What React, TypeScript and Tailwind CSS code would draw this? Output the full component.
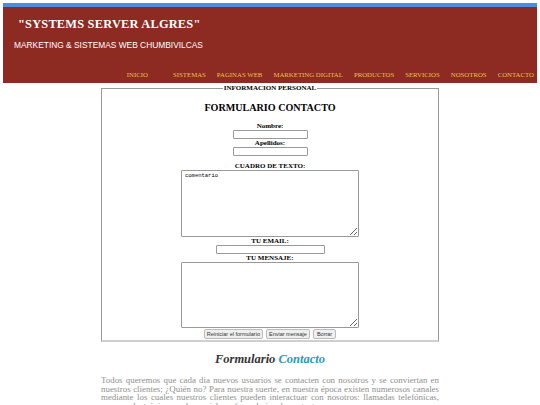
const navItems = [
  "SISTEMAS",
  "PAGINAS WEB",
  "MARKETING DIGITAL",
  "PRODUCTOS",
  "SERVICIOS",
  "NOSOTROS",
  "CONTACTO",
];

export default function App() {
  const serif = { fontFamily: '"Liberation Serif", "Times New Roman", serif' };
  return (
    <div className="w-[540px] h-[405px] overflow-hidden bg-white" style={serif}>
      {/* Header */}
      <div className="px-[3px] pt-[3px]">
        <div className="h-[4px] bg-[#4a90d9]" />
        <div className="h-[76px] bg-[#8d2a22] flex flex-col">
          <h1 className="pl-[15px] pt-[10px] text-[12.4px] leading-[15px] font-bold text-white tracking-[0.2px]">
            "SYSTEMS SERVER ALGRES"
          </h1>
          <p
            className="pl-[11px] pt-[8px] text-[8.4px] leading-[10px] text-white"
            style={{ fontFamily: '"Liberation Sans", Arial, sans-serif' }}
          >
            MARKETING &amp; SISTEMAS WEB CHUMBIVILCAS
          </p>
          <nav className="mt-auto mb-[4px] flex justify-end gap-[11px] pr-[3px] text-[6.8px] leading-[8px] text-[#e9c545]">
            <span className="mr-[14px]">INICIO</span>
            {navItems.map((n) => (
              <span key={n}>{n}</span>
            ))}
          </nav>
        </div>
      </div>

      {/* Form */}
      <fieldset className="ml-[101px] mt-[1px] w-[338px] h-[258px] border border-[#9a9a9a] border-b-[#cfcfcf] border-b-2">
        <legend className="mx-auto px-[1px] text-[7px] leading-[8px] font-bold text-black">
          INFORMACION PERSONAL
        </legend>
        <div className="flex flex-col items-center text-black">
          <h2 className="mt-[10px] text-[10.1px] leading-[12px] font-bold">FORMULARIO CONTACTO</h2>
          <label className="mt-[8px] text-[7px] leading-[8px] font-bold">Nombre:</label>
          <input className="w-[75px] h-[9px] border border-[#999] rounded-[1px]" />
          <label className="text-[7px] leading-[8px] font-bold">Apellidos:</label>
          <input className="w-[75px] h-[9px] border border-[#999] rounded-[1px]" />
          <label className="mt-[6px] text-[7px] leading-[8px] font-bold">CUADRO DE TEXTO:</label>
          <textarea
            defaultValue="comentario"
            className="w-[178px] h-[67px] border border-[#999] rounded-[1px] px-[3px] py-[1px] text-[5.5px] leading-[7px] resize-y"
            style={{ fontFamily: '"Liberation Mono", monospace' }}
          />
          <label className="text-[7px] leading-[8px] font-bold">TU EMAIL:</label>
          <input className="w-[109px] h-[9px] border border-[#999] rounded-[1px]" />
          <label className="text-[7px] leading-[8px] font-bold">TU MENSAJE:</label>
          <textarea className="w-[178px] h-[66px] border border-[#999] rounded-[1px] resize-y" />
          <div
            className="mt-[1px] flex gap-[3px] text-[5.5px] leading-[6px] text-[#333]"
            style={{ fontFamily: '"Liberation Sans", Arial, sans-serif' }}
          >
            <button className="h-[10px] px-[2px] border border-[#bbb] bg-[#efefef] rounded-[2px]">
              Reiniciar el formulario
            </button>
            <button className="h-[10px] px-[2px] border border-[#bbb] bg-[#efefef] rounded-[2px]">
              Enviar mensaje
            </button>
            <button className="h-[10px] px-[3px] border border-[#bbb] bg-[#efefef] rounded-[2px]">
              Borrar
            </button>
          </div>
        </div>
      </fieldset>

      {/* Article */}
      <div className="ml-[101px] w-[338px]">
        <h3 className="mt-[9px] text-center text-[12.5px] leading-[16px] font-bold italic text-[#333]">
          Formulario <span className="text-[#2a9ab8]">Contacto</span>
        </h3>
        <p className="mt-[9px] text-justify text-[8.9px] leading-[8.7px] text-[#8f8f8f]">
          Todos queremos que cada dia nuevos usuarios se contacten con nosotros y se conviertan en
          nuestros clientes; ¿Quién no? Para nuestra suerte, en nuestra época existen numerosos canales
          mediante los cuales nuestros clientes pueden interactuar con nosotros: llamadas telefónicas,
          correos electrónicos, redes sociales y formularios de contacto.
        </p>
      </div>
    </div>
  );
}
